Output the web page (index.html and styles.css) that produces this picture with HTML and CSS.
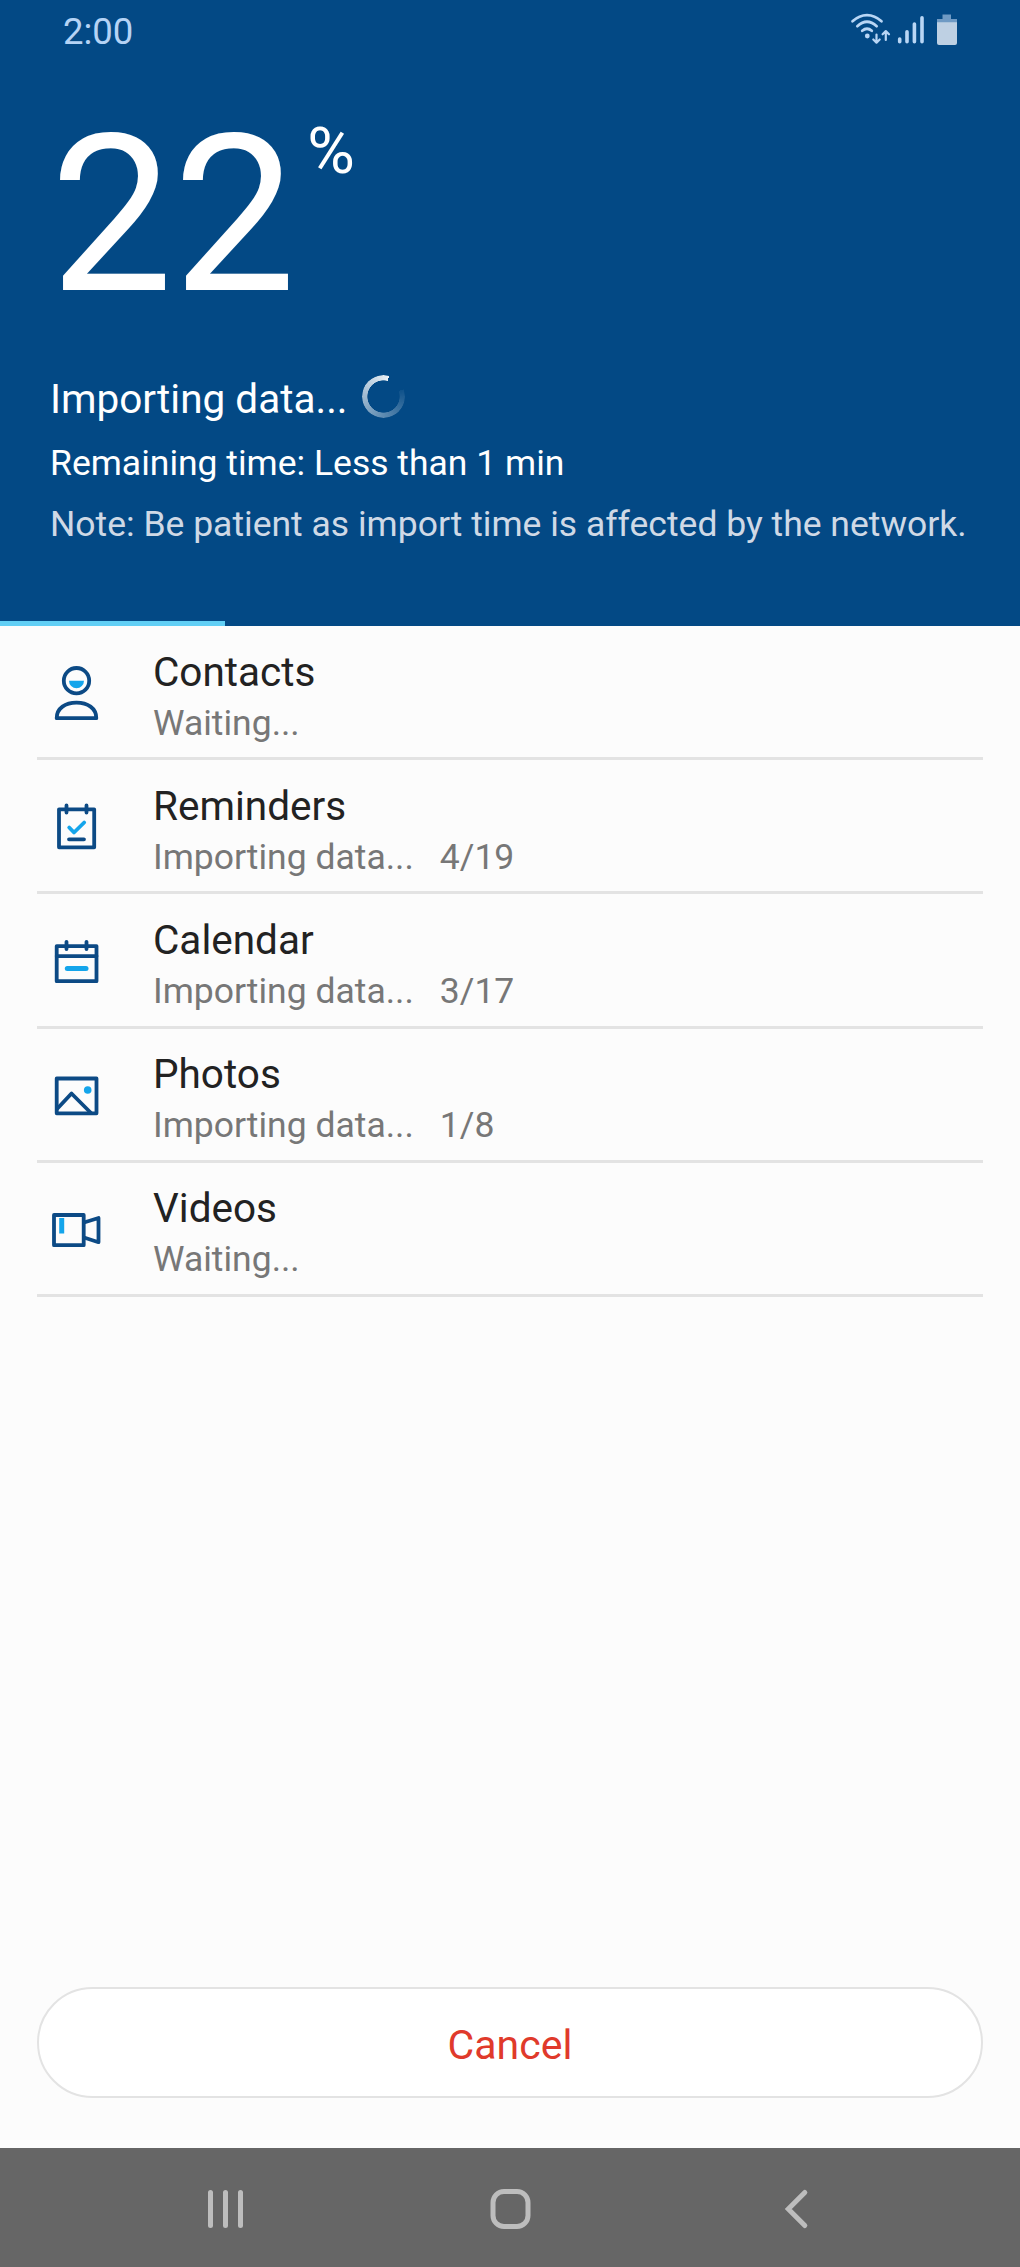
FILE: index.html
```html
<!DOCTYPE html>
<html lang="en">
<head>
    <meta charset="UTF-8">
    <meta name="viewport" content="width=device-width, initial-scale=1.0">
    <title>Importing data</title>
    <link rel="stylesheet" href="styles.css">
</head>
<body>
    <div class="screen">
        <header class="header">
            <div class="status-bar">
                <span class="time">2:00</span>
                <svg class="status-icons" width="108" height="34" viewBox="0 0 108 34" fill="none">
                    <!-- wifi -->
                    <g stroke="#b9d6f5" stroke-width="2.7" stroke-linecap="round">
                        <path d="M2.5 9.3C11.5 1 22.5 1 31.5 9.3"/>
                        <path d="M7.3 14.2C13.5 8.5 20.5 8.5 26.7 14.2"/>
                        <path d="M12.2 18.8C15.5 16 18.5 16 21.8 18.8"/>
                    </g>
                    <circle cx="17.3" cy="24" r="2.4" fill="#b9d6f5"/>
                    <g stroke="#b9d6f5" stroke-width="2.2" stroke-linecap="round" stroke-linejoin="round">
                        <path d="M26.5 22.5V30.5M23.3 27.5L26.5 30.7L29.7 27.5"/>
                        <path d="M35.8 28V19.5M32.6 22.3L35.8 19.1L39 22.3"/>
                    </g>
                    <!-- signal -->
                    <g stroke="#b9d6f5" stroke-width="3.6" stroke-linecap="round">
                        <path d="M49.7 27V29.7M57 19.7V29.7M64.4 12V29.7M72 5.7V29.7"/>
                    </g>
                    <!-- battery -->
                    <path d="M92.5 2.5H101V7H107V12H87V7H92.5Z" fill="#6f9ac4"/>
                    <path d="M87 10.3H107V31a2 2 0 0 1-2 2H89a2 2 0 0 1-2-2Z" fill="#bed0e3"/>
                </svg>
            </div>

            <div class="percent">
                <span class="percent-number">22</span>
                <span class="percent-sign">%</span>
            </div>

            <div class="summary">
                <div class="summary-title">
                    <span class="summary-text">Importing data...</span>
                    <div class="spinner"></div>
                </div>
                <p class="remaining">Remaining time: Less than 1 min</p>
                <p class="note">Note: Be patient as import time is affected by the network.</p>
            </div>

            <div class="progress">
                <div class="progress-bar" style="width: 22.06%"></div>
            </div>
        </header>

        <main class="list">
            <div class="item">
                <svg class="item-icon" width="52" height="60" viewBox="0 0 52 60">
                    <circle cx="25.5" cy="18.7" r="12.7"/>
                    <path d="M5.7 56.2C5.7 46 14.5 40.7 25.5 40.7S45.3 46 45.3 56.2Z"/>
                    <path class="accent" d="M18 18.7H33A7.5 7.5 0 0 1 18 18.7Z"/>
                </svg>
                <div class="item-body">
                    <div class="item-title">Contacts</div>
                    <div class="item-status">Waiting...</div>
                </div>
            </div>
            <div class="item">
                <svg class="item-icon" width="52" height="60" viewBox="0 0 52 60">
                    <path d="M8 13.3H43.2V51.3H8Z"/>
                    <path d="M15.5 9.5V16.5M35.5 9.5V16.5M18 43.3H33"/>
                    <path class="accent-line" d="M18.2 31.5L23 36.5L33.2 26.5"/>
                </svg>
                <div class="item-body">
                    <div class="item-title">Reminders</div>
                    <div class="item-status">Importing data...<span class="count">4/19</span></div>
                </div>
            </div>
            <div class="item">
                <svg class="item-icon" width="52" height="60" viewBox="0 0 52 60">
                    <path d="M5.7 16.1H45.5V51.2H5.7Z"/>
                    <path d="M5.7 26.1H45.5M15.5 11.8V19M35.5 11.8V19"/>
                    <path class="accent-line thick" d="M16.3 38.5H35"/>
                </svg>
                <div class="item-body">
                    <div class="item-title">Calendar</div>
                    <div class="item-status">Importing data...<span class="count">3/17</span></div>
                </div>
            </div>
            <div class="item">
                <svg class="item-icon" width="52" height="60" viewBox="0 0 52 60">
                    <path d="M5.7 13.5H45.5V48.3H5.7Z"/>
                    <path d="M6 44L20.5 28.5L40 48"/>
                    <circle class="accent" cx="36.7" cy="25" r="3.8"/>
                </svg>
                <div class="item-body">
                    <div class="item-title">Photos</div>
                    <div class="item-status">Importing data...<span class="count">1/8</span></div>
                </div>
            </div>
            <div class="item">
                <svg class="item-icon" width="52" height="60" viewBox="0 0 52 60">
                    <path d="M3 16H32.7V46.2H3Z"/>
                    <path d="M33 23.5L47.5 19V43.2L33 38.5"/>
                    <path class="accent" d="M8.2 19H13.2V34.5H8.2Z"/>
                </svg>
                <div class="item-body">
                    <div class="item-title">Videos</div>
                    <div class="item-status">Waiting...</div>
                </div>
            </div>
        </main>

        <div class="actions">
            <button class="cancel">Cancel</button>
        </div>

        <nav class="nav-bar">
            <svg width="50" height="50" viewBox="0 0 50 50">
                <path d="M10.5 8.5V41.5M25.5 8.5V41.5M40.5 8.5V41.5"/>
            </svg>
            <svg width="50" height="50" viewBox="0 0 50 50">
                <rect x="8" y="7.5" width="35" height="35" rx="11"/>
            </svg>
            <svg width="50" height="50" viewBox="0 0 50 50">
                <path d="M34.8 8.5L18.3 25L34.8 41.5"/>
            </svg>
        </nav>
    </div>
</body>
</html>
```

FILE: styles.css
```css
* {
    margin: 0;
    padding: 0;
    box-sizing: border-box;
}

body {
    font-family: Roboto, 'Liberation Sans', sans-serif;
    background: #fcfcfc;
    color: #222;
}

.screen {
    display: flex;
    flex-direction: column;
    height: 2267px;
}

/* header */
.header {
    display: flex;
    flex-direction: column;
    height: 626px;
    background: #034985;
    color: #fff;
}

.status-bar {
    display: flex;
    justify-content: space-between;
    height: 65px;
    padding: 12px 62px 0 63px;
}

.time {
    font-size: 36.5px;
    line-height: 40px;
    color: #b5d3f5;
}

.percent {
    display: flex;
    align-items: flex-start;
    margin: 50px 0 60px 50px;
}

.percent-number {
    font-size: 219px;
    line-height: 200px;
}

.percent-sign {
    margin: 3px 0 0 11px;
    font-size: 65px;
    line-height: 66px;
}

.summary {
    padding-left: 50px;
    white-space: nowrap;
}

.summary-title {
    display: flex;
    font-size: 40.5px;
    line-height: 49px;
}

.spinner {
    width: 43px;
    height: 43px;
    margin-left: 14px;
    border-radius: 50%;
    background: conic-gradient(from 70deg, rgba(255,255,255,0.05), rgba(255,255,255,0.92) 305deg, transparent 305deg);
    -webkit-mask: radial-gradient(circle, transparent 15.8px, #000 16.4px);
    mask: radial-gradient(circle, transparent 15.8px, #000 16.4px);
}

.remaining {
    margin-top: 17px;
    font-size: 35.5px;
    line-height: 44px;
}

.note {
    margin-top: 17px;
    font-size: 35.5px;
    line-height: 44px;
    color: #cfd9e6;
}

.progress {
    height: 5px;
    margin-top: auto;
}

.progress-bar {
    height: 100%;
    background: #61cff5;
}

/* list */
.list {
    flex: 1;
    padding: 0 37px;
}

.item {
    display: flex;
    height: 134.2px;
    border-bottom: 3px solid #e3e3e3;
}

.item-icon {
    margin: 36px 50px 0 14px;
    fill: none;
    stroke: #0c4a85;
    stroke-width: 3.8;
    stroke-linecap: round;
    stroke-linejoin: round;
}

.item-icon .accent {
    fill: #14a5eb;
    stroke: none;
}

.item-icon .accent-line {
    stroke: #14a5eb;
}

.item-icon .thick {
    stroke-width: 5;
}

.item-body {
    padding-top: 21.6px;
}

.item-title {
    font-size: 40.5px;
    line-height: 48px;
}

.item-status {
    margin-top: 5px;
    font-size: 35.5px;
    line-height: 44px;
    color: #777;
}

.count {
    margin-left: 26px;
}

/* bottom */
.actions {
    padding: 0 37px 50px;
}

.cancel {
    display: block;
    width: 100%;
    height: 111px;
    border: 2px solid #e3e3e3;
    border-radius: 56px;
    background: #fff;
    padding-top: 4px;
    font-family: inherit;
    font-size: 41px;
    color: #e03a2b;
}

.nav-bar {
    display: flex;
    justify-content: space-between;
    height: 119px;
    padding: 36px 200px 0 200px;
    background: #666;
}

.nav-bar svg {
    fill: none;
    stroke: #bdbdbd;
    stroke-width: 5;
    stroke-linecap: round;
}
```
